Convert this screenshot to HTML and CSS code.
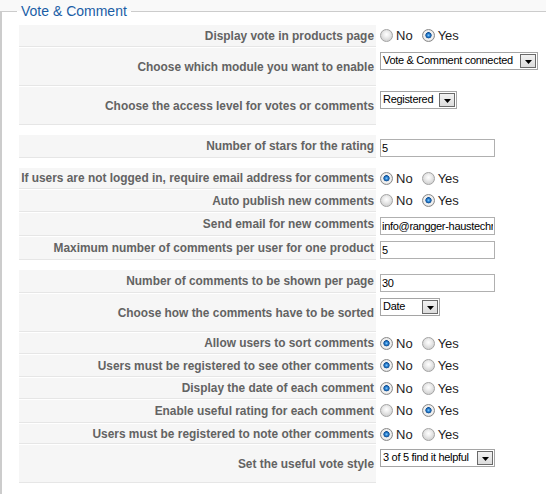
FILE: index.html
```html
<!DOCTYPE html>
<html>
<head>
<meta charset="utf-8">
<link rel="stylesheet" href="styles.css">
</head>
<body>
<div class="page">
<fieldset class="panel">
  <legend class="panel-title">Vote &amp; Comment</legend>
  <div class="form">
    <div class="row h22">
      <div class="key">Display vote in products page</div>
      <div class="val"><label class="opt"><input type="radio" name="r1">No</label><label class="opt"><input type="radio" name="r1" checked>Yes</label></div>
    </div>
    <div class="row h38">
      <div class="key">Choose which module you want to enable</div>
      <div class="val"><div class="select w158"><span class="select-text">Vote &amp; Comment connected</span><span class="select-btn"><svg width="7" height="4" viewBox="0 0 7 4"><path d="M0 0H7L3.5 4Z" fill="#000"/></svg></span></div></div>
    </div>
    <div class="row h38 sep">
      <div class="key">Choose the access level for votes or comments</div>
      <div class="val"><div class="select w77"><span class="select-text">Registered</span><span class="select-btn"><svg width="7" height="4" viewBox="0 0 7 4"><path d="M0 0H7L3.5 4Z" fill="#000"/></svg></span></div></div>
    </div>

    <div class="row h23 sep">
      <div class="key">Number of stars for the rating</div>
      <div class="val"><input class="text" type="text" value="5"></div>
    </div>

    <div class="row h21">
      <div class="key">If users are not logged in, require email address for comments</div>
      <div class="val"><label class="opt"><input type="radio" name="r5" checked>No</label><label class="opt"><input type="radio" name="r5">Yes</label></div>
    </div>
    <div class="row h22">
      <div class="key">Auto publish new comments</div>
      <div class="val"><label class="opt"><input type="radio" name="r6">No</label><label class="opt"><input type="radio" name="r6" checked>Yes</label></div>
    </div>
    <div class="row h23">
      <div class="key">Send email for new comments</div>
      <div class="val"><input class="text" type="text" value="info@rangger-haustechnik.at"></div>
    </div>
    <div class="row h23 sep">
      <div class="key">Maximum number of comments per user for one product</div>
      <div class="val"><input class="text" type="text" value="5"></div>
    </div>

    <div class="row h23">
      <div class="key">Number of comments to be shown per page</div>
      <div class="val"><input class="text" type="text" value="30"></div>
    </div>
    <div class="row h38">
      <div class="key">Choose how the comments have to be sorted</div>
      <div class="val"><div class="select w60"><span class="select-text">Date</span><span class="select-btn"><svg width="7" height="4" viewBox="0 0 7 4"><path d="M0 0H7L3.5 4Z" fill="#000"/></svg></span></div></div>
    </div>
    <div class="row h21">
      <div class="key">Allow users to sort comments</div>
      <div class="val"><label class="opt"><input type="radio" name="r11" checked>No</label><label class="opt"><input type="radio" name="r11">Yes</label></div>
    </div>
    <div class="row h22">
      <div class="key">Users must be registered to see other comments</div>
      <div class="val"><label class="opt"><input type="radio" name="r12" checked>No</label><label class="opt"><input type="radio" name="r12">Yes</label></div>
    </div>
    <div class="row h21">
      <div class="key">Display the date of each comment</div>
      <div class="val"><label class="opt"><input type="radio" name="r13" checked>No</label><label class="opt"><input type="radio" name="r13">Yes</label></div>
    </div>
    <div class="row h23">
      <div class="key">Enable useful rating for each comment</div>
      <div class="val"><label class="opt"><input type="radio" name="r14">No</label><label class="opt"><input type="radio" name="r14" checked>Yes</label></div>
    </div>
    <div class="row h20">
      <div class="key">Users must be registered to note other comments</div>
      <div class="val"><label class="opt"><input type="radio" name="r15" checked>No</label><label class="opt"><input type="radio" name="r15">Yes</label></div>
    </div>
    <div class="row h38">
      <div class="key">Set the useful vote style</div>
      <div class="val"><div class="select w115"><span class="select-text">3 of 5 find it helpful</span><span class="select-btn"><svg width="7" height="4" viewBox="0 0 7 4"><path d="M0 0H7L3.5 4Z" fill="#000"/></svg></span></div></div>
    </div>
  </div>
</fieldset>
</div>
</body>
</html>
```

FILE: styles.css
```css
html, body {
  margin: 0;
  padding: 0;
  background: #f9f9f9;
}

.page {
  width: 546px;
  height: 494px;
  overflow: hidden;
  background: #f9f9f9;
  font-family: "Liberation Sans", Arial, sans-serif;
}

.panel {
  margin: 3px 0 0 0;
  padding: 6px 0 40px 17px;
  border: 1px solid #cccccc;
  border-left-width: 2px;
  border-right: none;
  background: #ffffff;
  min-width: 0;
}

.panel-title {
  padding: 0 4px;
  margin-left: -2px;
  font-size: 14px;
  line-height: 16px;
  color: #1b5ea6;
}

.form {
  display: flex;
  flex-direction: column;
  gap: 1px;
}

.row {
  display: flex;
  gap: 1px;
}

.row.sep {
  margin-bottom: 9px;
}

.h20 { height: 20px; }
.h21 { height: 21px; }
.h22 { height: 22px; }
.h23 { height: 23px; }
.h38 { height: 38px; }

.key {
  flex: none;
  width: 357px;
  box-sizing: border-box;
  display: flex;
  align-items: center;
  justify-content: flex-end;
  padding-right: 2px;
  background: #f6f6f6;
  border-bottom: 1px solid #e6e6e6;
  color: #636363;
  font-weight: bold;
  font-size: 11.9px;
  white-space: nowrap;
}

.val {
  display: flex;
  align-items: flex-start;
  padding: 4px 0 0 3px;
}

.opt {
  display: flex;
  align-items: center;
  gap: 3px;
  margin-right: 9px;
  font-size: 13px;
  line-height: 13px;
  color: #1e1e1e;
}

.opt input {
  appearance: none;
  -webkit-appearance: none;
  margin: 0;
  width: 13px;
  height: 13px;
  border-radius: 50%;
  border: 1px solid #a3a3a3;
  box-sizing: border-box;
  background: radial-gradient(circle at 50% 40%, #ffffff 0, #f0f0f0 2.5px, #d6d6d6 6px);
}

.opt input:checked {
  border-color: #8a8a8a;
  background: radial-gradient(circle at 50% 48%, #8fd0ff 0, #2d86d6 1.4px, #0d4d93 2.8px, #e9e9e9 3.4px, #f3f3f3 4.5px, #d4d4d4 6px);
}

.text {
  width: 115px;
  height: 18px;
  box-sizing: border-box;
  margin: 0;
  padding: 0 1px;
  border: 1px solid #b0b0b0;
  font-family: "Liberation Sans", Arial, sans-serif;
  font-size: 11px;
  letter-spacing: -0.3px;
  color: #000;
  background: #fff;
  outline: none;
}

.select {
  display: flex;
  align-items: center;
  height: 18px;
  box-sizing: border-box;
  border: 1px solid #a5a5a5;
  background: #fff;
  font-size: 11px;
  letter-spacing: -0.3px;
  color: #000;
}

.w158 { width: 158px; }
.w77 { width: 77px; }
.w60 { width: 60px; }
.w115 { width: 115px; }

.select-text {
  flex: 1;
  padding-left: 2px;
  white-space: nowrap;
  overflow: hidden;
  line-height: 14px;
  margin-top: -2px;
}

.select-btn {
  flex: none;
  width: 16px;
  height: 14px;
  box-sizing: border-box;
  margin: 0 1px 0 0;
  border: 1px solid #6a6a6a;
  background: linear-gradient(#f2f2f2, #dcdcdc);
  display: flex;
  align-items: center;
  justify-content: center;
}

.select-btn svg {
  display: block;
  margin-top: 1px;
}
```
